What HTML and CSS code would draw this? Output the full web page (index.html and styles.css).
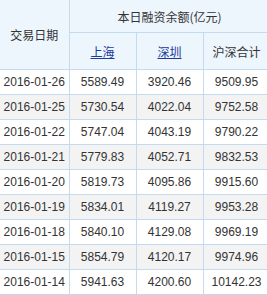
FILE: index.html
```html
<!DOCTYPE html>
<html lang="zh-CN">
<head>
<meta charset="utf-8">
<link rel="stylesheet" href="styles.css">
</head>
<body>
<table class="grid">
  <colgroup>
    <col class="c-date">
    <col class="c-num">
    <col class="c-num">
    <col class="c-sum">
  </colgroup>
  <thead>
    <tr class="h1">
      <th rowspan="2" class="first">交易日期</th>
      <th colspan="3">本日融资余额(亿元)</th>
    </tr>
    <tr class="h2">
      <th><a href="#">上海</a></th>
      <th><a href="#">深圳</a></th>
      <th>沪深合计</th>
    </tr>
  </thead>
  <tbody>
    <tr><td class="first">2016-01-26</td><td>5589.49</td><td>3920.46</td><td>9509.95</td></tr>
    <tr class="alt"><td class="first">2016-01-25</td><td>5730.54</td><td>4022.04</td><td>9752.58</td></tr>
    <tr><td class="first">2016-01-22</td><td>5747.04</td><td>4043.19</td><td>9790.22</td></tr>
    <tr class="alt"><td class="first">2016-01-21</td><td>5779.83</td><td>4052.71</td><td>9832.53</td></tr>
    <tr><td class="first">2016-01-20</td><td>5819.73</td><td>4095.86</td><td>9915.60</td></tr>
    <tr class="alt"><td class="first">2016-01-19</td><td>5834.01</td><td>4119.27</td><td>9953.28</td></tr>
    <tr><td class="first">2016-01-18</td><td>5840.10</td><td>4129.08</td><td>9969.19</td></tr>
    <tr class="alt"><td class="first">2016-01-15</td><td>5854.79</td><td>4120.17</td><td>9974.96</td></tr>
    <tr><td class="first">2016-01-14</td><td>5941.63</td><td>4200.60</td><td>10142.23</td></tr>
  </tbody>
</table>
</body>
</html>
```

FILE: styles.css
```css
html, body {
  margin: 0;
  padding: 0;
  background: #ffffff;
}

.grid {
  border-collapse: collapse;
  table-layout: fixed;
  width: 270px;
  font-family: "Liberation Sans", Arial, "Noto Sans CJK SC", sans-serif;
  font-size: 12px;
  color: #333333;
}

.c-date { width: 69px; }
.c-num { width: 67px; }
.c-sum { width: 67px; }

.grid th,
.grid td {
  border: 1px solid #c4daee;
  padding: 0;
  text-align: center;
  white-space: nowrap;
}

.grid .first {
  border-left: none;
}

.grid th {
  background: #edf5fd;
  font-weight: normal;
  font-family: "Noto Sans CJK SC", "Liberation Sans", sans-serif;
  color: #333333;
}

.grid .h1 th {
  border-top: none;
  height: 32px;
}

.grid .h2 th {
  height: 36px;
}

.grid td {
  height: 24px;
  line-height: 14px;
}

.grid .alt td {
  background: #f3f3f3;
}

.grid a {
  color: #1a3a9c;
  text-decoration: underline;
}
```
